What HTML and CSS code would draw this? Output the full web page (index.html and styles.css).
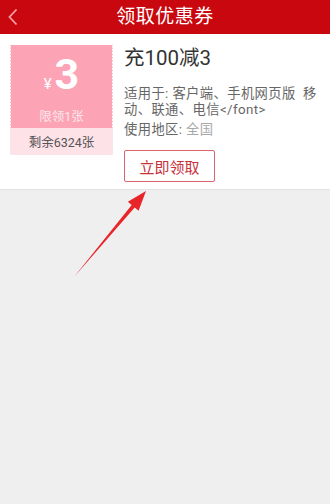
FILE: index.html
```html
<!DOCTYPE html>
<html lang="zh-CN">
<head>
<meta charset="utf-8">
<title>领取优惠券</title>
<link rel="stylesheet" href="styles.css">
</head>
<body>
<header class="topbar">
  <svg class="back" width="12" height="18" viewBox="0 0 12 18"><path d="M9.5 1.5 L2.5 9 L9.5 16.5" fill="none" stroke="#f4a0a4" stroke-width="1.8"/></svg>
  <h1 class="title">领取优惠券</h1>
</header>
<section class="card">
  <div class="coupon">
    <div class="coupon-top">
      <div class="amount"><span class="yen">¥</span><span class="num">3</span></div>
      <div class="limit">限领1张</div>
    </div>
    <div class="coupon-bottom">剩余6324张</div>
  </div>
  <div class="info">
    <div class="name">充100减3</div>
    <p class="desc">适用于: 客户端、手机网页版&nbsp;&nbsp;移动、联通、电信&lt;/font&gt;</p>
    <p class="desc area">使用地区: <span class="light">全国</span></p>
    <button class="get">立即领取</button>
  </div>
</section>
<svg class="arrow" width="330" height="504" viewBox="0 0 330 504"><polygon points="146,191 127.8,201.8 131.7,205 74,277 134.7,207.6 138.6,210.8" fill="#e8262a"/></svg>
</body>
</html>
```
FILE: styles.css
```css
html, body {
  margin: 0;
  padding: 0;
}
body {
  width: 330px;
  height: 504px;
  background: #efefef;
  font-family: "Roboto", "Noto Sans CJK SC", sans-serif;
  position: relative;
  overflow: hidden;
}
.topbar {
  height: 34px;
  background: #c9070e;
  display: flex;
  align-items: center;
  justify-content: center;
  position: relative;
}
.back {
  position: absolute;
  left: 7px;
  top: 8px;
}
.title {
  margin: 0;
  color: #fff;
  font-size: 19px;
  font-weight: normal;
  letter-spacing: 0.5px;
  line-height: 34px;
}
.card {
  background: #fff;
  height: 156px;
  box-sizing: border-box;
  padding: 11px 10px 0 10px;
  display: flex;
  gap: 11px;
  border-bottom: 1px solid #e2e2e2;
}
.coupon {
  width: 103px;
  height: 110px;
  display: flex;
  flex-direction: column;
  position: relative;
  flex-shrink: 0;
}
.coupon::before,
.coupon::after {
  content: "";
  position: absolute;
  top: 0;
  width: 4px;
  height: 83px;
  background-image: radial-gradient(circle at center, #fff 1.1px, transparent 1.4px);
  background-size: 4px 3.2px;
}
.coupon::before { left: -2px; }
.coupon::after { right: -2px; }
.coupon-top {
  height: 83px;
  background: #fca4b5;
  color: #fff;
  display: flex;
  flex-direction: column;
  align-items: center;
}
.amount {
  margin-top: 8px;
  height: 42px;
  display: flex;
  align-items: baseline;
  line-height: 42px;
}
.yen {
  font-size: 15px;
  margin-right: 3px;
}
.num {
  font-size: 43px;
  font-weight: bold;
  font-family: "Roboto", "Liberation Sans", sans-serif;
}
.limit {
  margin-top: 14px;
  font-size: 12.5px;
  color: #fde6eb;
  line-height: 16px;
}
.coupon-bottom {
  flex: 1;
  background: #fde2e8;
  color: #555;
  font-size: 12.5px;
  display: flex;
  align-items: center;
  justify-content: center;
}
.info {
  flex: 1;
  min-width: 0;
  display: flex;
  flex-direction: column;
  align-items: flex-start;
}
.name {
  font-size: 20.5px;
  color: #333;
  line-height: 26px;
  margin-top: 0;
  margin-bottom: 15px;
}
.desc {
  margin: 0;
  font-size: 13.3px;
  line-height: 16px;
  letter-spacing: 0.4px;
  color: #666;
}
.area {
  margin-top: 3.5px;
}
.light {
  color: #a8a8a8;
}
.get {
  margin-top: 12.5px;
  width: 91px;
  height: 32px;
  background: #fff;
  border: 1.5px solid #d9646e;
  border-radius: 2px;
  color: #c8303a;
  font-size: 15px;
  font-family: "Noto Sans CJK SC", sans-serif;
  padding: 0;
}
.arrow {
  position: absolute;
  left: 0;
  top: 0;
  pointer-events: none;
}
```
